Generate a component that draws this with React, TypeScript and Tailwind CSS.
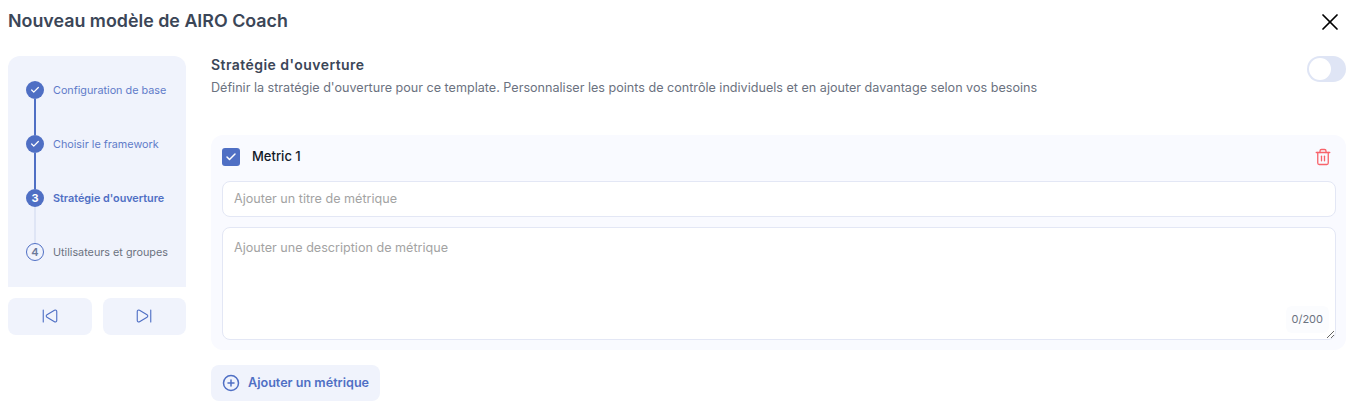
import { Check, Trash2, X, CirclePlus, SkipBack, SkipForward } from "lucide-react";

const steps = [
  { label: "Configuration de base", state: "done" },
  { label: "Choisir le framework", state: "done" },
  { label: "Stratégie d'ouverture", state: "current" },
  { label: "Utilisateurs et groupes", state: "todo" },
];

function Step({ label, state, index }: { label: string; state: string; index: number }) {
  const last = index === steps.length - 1;
  return (
    <div className={`flex gap-[9px] ${last ? "h-[18px]" : "h-[54px]"}`}>
      <div className="flex w-[18px] flex-col items-center">
        {state === "done" && (
          <div className="flex h-[18px] w-[18px] shrink-0 items-center justify-center rounded-full bg-[#4f6fc4]">
            <Check size={10} strokeWidth={3} className="text-white" />
          </div>
        )}
        {state === "current" && (
          <div className="flex h-[18px] w-[18px] shrink-0 items-center justify-center rounded-full bg-[#4f6fc4] text-[11px] font-bold text-white">
            {index + 1}
          </div>
        )}
        {state === "todo" && (
          <div className="flex h-[18px] w-[18px] shrink-0 items-center justify-center rounded-full border border-[#4f6fc4] text-[11px] font-semibold text-[#6b7a99]">
            {index + 1}
          </div>
        )}
        {!last && (
          <div className={`w-[2px] flex-1 ${state === "done" ? "bg-[#4f6fc4]" : "bg-[#dfe5f5]"}`} />
        )}
      </div>
      <div
        className={`h-[18px] pt-px text-[10.8px] leading-[18px] whitespace-nowrap ${
          state === "done"
            ? "text-[#5f7bc9]"
            : state === "current"
              ? "font-semibold text-[#4f6fc4]"
              : "text-[#6b7280]"
        }`}
      >
        {label}
      </div>
    </div>
  );
}

export default function App() {
  return (
    <div className="h-[406px] w-[1353px] overflow-hidden bg-white font-['Inter',sans-serif]">
      <div className="flex h-[44px] items-center justify-between pl-2 pr-[9px]">
        <h1 className="pb-[2px] text-[17.85px] font-semibold text-[#3b4657]">Nouveau modèle de AIRO Coach</h1>
        <X size={28} strokeWidth={1.5} className="text-black" />
      </div>
      <div className="mt-3 flex gap-[25px] pl-2 pr-[7px]">
        <div className="w-[178px] shrink-0">
          <div className="rounded-t-xl bg-[#f0f3fc] pb-[26px] pl-[18px] pt-[25px]">
            {steps.map((s, i) => (
              <Step key={s.label} label={s.label} state={s.state} index={i} />
            ))}
          </div>
          <div className="mt-[11px] flex gap-[11px]">
            <button className="flex h-[37px] flex-1 items-center justify-center rounded-lg bg-[#f0f3fc] pb-px text-[#4f6fc4]">
              <SkipBack size={18} strokeWidth={1.5} />
            </button>
            <button className="flex h-[37px] flex-1 items-center justify-center rounded-lg bg-[#f0f3fc] pb-px text-[#4f6fc4]">
              <SkipForward size={18} strokeWidth={1.5} />
            </button>
          </div>
        </div>
        <div className="min-w-0 flex-1">
          <div className="flex justify-between">
            <div>
              <div className="text-[14px] leading-[18px] font-semibold tracking-[0.45px] text-[#3b4657]">
                Stratégie d'ouverture
              </div>
              <div className="mt-[5px] text-[12.6px] leading-[18px] text-[#6b7280]">
                Définir la stratégie d'ouverture pour ce template. Personnaliser les points de contrôle individuels et en ajouter davantage selon vos besoins
              </div>
            </div>
            <div className="flex h-[26px] w-[39px] items-center rounded-full bg-[#dfe5f5] p-[2px]">
              <div className="h-[22px] w-[22px] rounded-full bg-white" />
            </div>
          </div>
          <div className="mt-[38px] rounded-xl bg-[#f9faff] pb-[10px] pl-[11px] pr-[10px] pt-[13px]">
            <div className="flex h-[18px] items-center justify-between pr-[4px]">
              <div className="flex items-center gap-3">
                <div className="flex h-[18px] w-[18px] items-center justify-center rounded-[3px] bg-[#4f6fc4]">
                  <Check size={12} strokeWidth={3} className="text-white" />
                </div>
                <span className="text-[13px] font-medium text-[#111827]">Metric 1</span>
              </div>
              <Trash2 size={18} strokeWidth={1.75} className="text-[#f8636b]" />
            </div>
            <input
              placeholder="Ajouter un titre de métrique"
              className="mt-[15px] block h-[36px] w-full rounded-lg border border-[#e3e7f5] bg-white px-[11px] pb-[2px] text-[12.6px] outline-none placeholder:text-[#a3a3a3]"
            />
            <div className="relative mt-[10px]">
              <textarea
                placeholder="Ajouter une description de métrique"
                className="block h-[113px] w-full rounded-lg border border-[#e3e7f5] bg-white px-[11px] py-[11px] text-[12.6px] leading-[18px] outline-none placeholder:text-[#a3a3a3]"
              />
              <div className="absolute bottom-[7px] right-[7px] rounded-md bg-[#fbfcfe] px-[6px] py-[6px] text-[11px] leading-[15px] text-[#6b7280]">
                0/200
              </div>
            </div>
          </div>
          <button className="mt-[15px] flex h-[36px] w-[169px] items-center gap-[8px] rounded-lg bg-[#f0f3fc] pl-[11px] text-[12.6px] font-semibold text-[#4f6fc4]">
            <CirclePlus size={18} strokeWidth={2} />
            Ajouter un métrique
          </button>
        </div>
      </div>
    </div>
  );
}
